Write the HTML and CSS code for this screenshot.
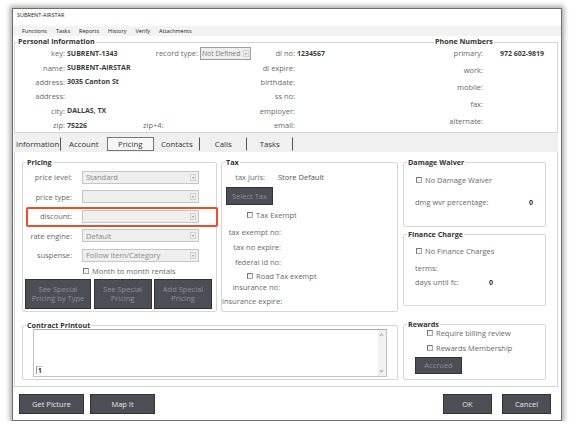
FILE: index.html
```html
<!DOCTYPE html>
<html lang="en">
<head>
    <meta charset="UTF-8">
    <title>SUBRENT-AIRSTAR</title>
    <link rel="stylesheet" href="styles.css">
</head>
<body>
<div class="window">
    <div class="titlebar">SUBRENT-AIRSTAR</div>
    <div class="menubar">
        <span>Functions</span><span>Tasks</span><span>Reports</span><span>History</span><span>Verify</span><span>Attachments</span>
    </div>

    <!-- dati anagrafici -->
    <div class="personal">
        <div class="legends">
            <span class="legend">Personal Information</span>
            <span class="legend">Phone Numbers</span>
        </div>
        <div class="personal-cols">
            <div class="pcol col-a">
                <div class="prow"><label>key:</label><b>SUBRENT-1343</b></div>
                <div class="prow"><label>name:</label><b>SUBRENT-AIRSTAR</b></div>
                <div class="prow"><label>address:</label><b>3035 Canton St</b></div>
                <div class="prow"><label>address:</label></div>
                <div class="prow"><label>city:</label><b>DALLAS, TX</b></div>
                <div class="prow"><label>zip:</label><b>75226</b></div>
            </div>
            <div class="pcol col-b">
                <div class="prow rec">
                    <label>record type:</label>
                    <div class="select rec-select">Not Defined<span class="arrow"></span></div>
                </div>
                <div class="prow"></div>
                <div class="prow"></div>
                <div class="prow"></div>
                <div class="prow"></div>
                <div class="prow zip4"><label>zip+4:</label></div>
            </div>
            <div class="pcol col-c">
                <div class="prow"><label>dl no:</label><b>1234567</b></div>
                <div class="prow"><label>dl expire:</label></div>
                <div class="prow"><label>birthdate:</label></div>
                <div class="prow"><label>ss no:</label></div>
                <div class="prow"><label>employer:</label></div>
                <div class="prow"><label>email:</label></div>
            </div>
            <div class="pcol col-d">
                <div class="prow"><label>primary:</label><b>972 602-9819</b></div>
                <div class="prow"><label>work:</label></div>
                <div class="prow"><label>mobile:</label></div>
                <div class="prow"><label>fax:</label></div>
                <div class="prow"><label>alternate:</label></div>
            </div>
        </div>
    </div>

    <div class="tabs">
        <span class="tab first sep">Information</span>
        <span class="tab">Account</span>
        <span class="tab active">Pricing</span>
        <span class="tab sep">Contacts</span>
        <span class="tab sep">Calls</span>
        <span class="tab sep">Tasks</span>
    </div>

    <div class="tab-panel">
        <div class="top-row">
            <fieldset class="group pricing">
                <legend>Pricing</legend>
                <div class="frow"><label>price level:</label><div class="select">Standard<span class="arrow"></span></div></div>
                <div class="frow"><label>price type:</label><div class="select"><span class="arrow"></span></div></div>
                <div class="frow highlight"><label>discount:</label><div class="select"><span class="arrow"></span></div></div>
                <div class="frow"><label>rate engine:</label><div class="select">Default<span class="arrow"></span></div></div>
                <div class="frow"><label>suspense:</label><div class="select">Follow Item/Category<span class="arrow"></span></div></div>
                <div class="check month"><span class="box"></span>Month to month rentals</div>
                <div class="pricing-buttons">
                    <button class="btn disabled wide">See Special<br>Pricing by Type</button>
                    <button class="btn disabled">See Special<br>Pricing</button>
                    <button class="btn disabled">Add Special<br>Pricing</button>
                </div>
            </fieldset>

            <fieldset class="group tax">
                <legend>Tax</legend>
                <div class="trow juris"><label>tax juris:</label><span class="val">Store Default</span></div>
                <button class="btn disabled select-tax">Select Tax</button>
                <div class="check tax-check t-exempt"><span class="box"></span>Tax Exempt</div>
                <div class="trow t1"><label>tax exempt no:</label></div>
                <div class="trow t2"><label>tax no expire:</label></div>
                <div class="trow t3"><label>federal id no:</label></div>
                <div class="check tax-check t-road"><span class="box"></span>Road Tax exempt</div>
                <div class="trow t4"><label>insurance no:</label></div>
                <div class="trow t5"><label>insurance expire:</label></div>
            </fieldset>

            <div class="right-col">
                <fieldset class="group damage">
                    <legend>Damage Waiver</legend>
                    <div class="check side-check"><span class="box"></span>No Damage Waiver</div>
                    <div class="srow pct"><span>dmg wvr percentage:</span><span class="num">0</span></div>
                </fieldset>
                <fieldset class="group finance">
                    <legend>Finance Charge</legend>
                    <div class="check side-check"><span class="box"></span>No Finance Charges</div>
                    <div class="srow terms"><span>terms:</span></div>
                    <div class="srow"><span class="days">days until fc:</span><span class="num-left">0</span></div>
                </fieldset>
            </div>
        </div>

        <div class="bottom-row">
            <fieldset class="group contract">
                <legend>Contract Printout</legend>
                <div class="printout">
                    <div class="print-text"><span class="page-num">1</span></div>
                    <div class="scrollbar"><span class="up"></span><span class="down"></span></div>
                </div>
            </fieldset>
            <fieldset class="group rewards">
                <legend>Rewards</legend>
                <div class="check rw-check first-rw"><span class="box"></span>Require billing review</div>
                <div class="check rw-check"><span class="box"></span>Rewards Membership</div>
                <button class="btn disabled accrued">Accrued</button>
            </fieldset>
        </div>
    </div>

    <div class="footer">
        <button class="btn foot wide-foot">Get Picture</button>
        <button class="btn foot wide-foot">Map It</button>
        <button class="btn foot ok">OK</button>
        <button class="btn foot">Cancel</button>
    </div>
</div>
</body>
</html>
```

FILE: styles.css
```css
* {
    box-sizing: border-box;
}
body {
    margin: 0;
    background: #fff;
    font-family: "Open Sans", "Noto Sans", sans-serif;
    font-size: 7.5px;
    color: #6a6a6a;
}
.window {
    width: 550px;
    height: 413px;
    margin: 8px 0 0 12px;
    border: 1px solid #6f6f6f;
    box-shadow: 0 0 5px 2px rgba(0, 0, 0, 0.35);
    background: #fff;
}
.titlebar {
    height: 16px;
    line-height: 13px;
    padding-left: 4px;
    font-size: 5.5px;
    color: #222;
}
.menubar {
    display: flex;
    gap: 9px;
    margin-top: 1px;
    height: 10px;
    line-height: 10px;
    padding-left: 9px;
    background: #f3f3f3;
    font-size: 5.5px;
    color: #222;
}

/* personal information */
.personal {
    margin: 6px 3px 0 1px;
    border: 1px solid #d4d4d4;
}
.legends {
    display: grid;
    grid-template-columns: 415px 1fr;
    height: 9px;
    line-height: 9px;
    margin-top: -6px;
}
.legend {
    justify-self: start;
    margin-left: 2px;
    padding: 0 1px;
    background: #fff;
    font-weight: bold;
    font-size: 7.2px;
    color: #333;
}
.legends .legend + .legend {
    margin-left: 4px;
}
.personal-cols {
    display: flex;
}
.pcol .prow {
    display: flex;
    align-items: center;
    height: 14.4px;
}
.prow label {
    text-align: right;
    flex-shrink: 0;
}
.prow b {
    color: #3d3d3d;
    font-size: 7px;
}
.col-a {
    width: 125px;
}
.col-a label {
    width: 50px;
    margin-right: 2px;
}
.col-b {
    width: 115px;
}
.col-b .rec {
    justify-content: flex-end;
    padding-right: 4px;
}
.col-b .zip4 {
    padding-left: 3px;
}
.col-c {
    width: 175px;
}
.col-c label {
    width: 40px;
    margin-right: 2px;
}
.col-d .prow {
    height: 17px;
}
.col-d {
    margin-top: -1.5px;
}
.col-d label {
    width: 53px;
    margin-right: 17px;
}

.select {
    position: relative;
    display: flex;
    align-items: center;
    width: 117px;
    height: 13px;
    padding-left: 3px;
    border: 1px solid #c6c6c6;
    background: #efefef;
    color: #8a8a8a;
}
.select .arrow {
    position: absolute;
    right: 2px;
    top: 2px;
    width: 6px;
    height: 7px;
    border: 1px solid #d2d2d2;
}
.select .arrow::after {
    content: "";
    position: absolute;
    left: 1px;
    top: 2px;
    border-top: 2px solid #999;
    border-left: 1.5px solid transparent;
    border-right: 1.5px solid transparent;
}
.rec-select {
    width: 51px;
    margin-left: 2px;
    padding-left: 1px;
    border-color: #9c9c9c;
    color: #808080;
    font-size: 6.8px;
    white-space: nowrap;
}
.rec-select .arrow {
    right: 1px;
}

/* tabs */
.tabs {
    display: flex;
    height: 19px;
    margin: 0 3px 0 1px;
    padding-top: 4px;
    background: #f0f0f0;
}
.tab {
    width: 46.5px;
    height: 14px;
    line-height: 13px;
    text-align: center;
    font-size: 7.8px;
    color: #333;
    border: 1px solid transparent;
}
.tab.first {
    text-align: left;
    padding-left: 1px;
}
.tab.sep {
    border-right-color: #555;
}
.tab.active {
    border-color: #777;
    background: #f7f7f7;
}

.tab-panel {
    margin: 0 3px 0 1px;
    padding: 5px 0 6px 7px;
    border: 1px solid #d4d4d4;
    border-top: none;
}
.top-row,
.bottom-row {
    display: flex;
    align-items: flex-start;
}
.group {
    margin: 0;
    padding: 0;
    min-width: 0;
    border: 1px solid #d6d6d6;
    border-radius: 2px;
}
.group legend {
    margin-left: 3px;
    padding: 0 1px;
    line-height: 10px;
    font-weight: bold;
    font-size: 7.2px;
    color: #333;
}

/* pricing */
.pricing {
    width: 195px;
    height: 155px;
}
.frow {
    display: flex;
    align-items: center;
    height: 19.5px;
}
.frow label {
    width: 49px;
    margin-right: 10px;
    text-align: right;
}
.highlight {
    position: relative;
}
.highlight::after {
    content: "";
    position: absolute;
    left: 3px;
    right: -2px;
    top: 0.5px;
    bottom: -1.5px;
    border: 2px solid #ef4d24;
    border-radius: 2px;
}
.check {
    display: flex;
    align-items: center;
    height: 12px;
}
.check .box {
    width: 6px;
    height: 6px;
    margin-right: 3px;
    border: 1px solid #a8a8a8;
    border-top-color: #777;
    border-left-color: #777;
    background: #f3f3f3;
}
.month {
    padding-left: 60px;
}
.pricing-buttons {
    display: flex;
    gap: 2.5px;
    margin-top: 2.5px;
    padding-left: 2px;
}
.btn {
    font-family: inherit;
    font-size: 7.5px;
    line-height: 9.5px;
    padding: 0;
    background: #4b4e55;
    border: 1px solid #303236;
    color: #e6e6e6;
}
.btn.disabled {
    color: #8c8f95;
}
.pricing-buttons .btn {
    width: 58px;
    height: 30px;
}
.pricing-buttons .btn.wide {
    width: 66px;
}

/* tax */
.tax {
    width: 177px;
    height: 155px;
    margin-left: 4px;
}
.trow {
    display: flex;
    align-items: center;
    height: 14px;
}
.trow label {
    width: 59px;
    text-align: right;
    white-space: nowrap;
    flex-shrink: 0;
}
.juris {
    margin-top: 3px;
}
.juris label {
    width: 43px;
}
.juris .val {
    margin-left: 13px;
    color: #555;
}
.select-tax {
    display: block;
    width: 47px;
    height: 18px;
    margin: 3px 0 0 4px;
}
.tax-check {
    padding-left: 25px;
}
.t-exempt {
    height: 20px;
}
.t2 {
    height: 15px;
}
.t3 {
    height: 15px;
}
.t-road {
    height: 13px;
}
.t4 {
    height: 10px;
}
.t4 label {
    width: 58px;
}
.t5 {
    height: 15px;
    margin-top: 1px;
}
.t5 label {
    width: auto;
    margin-left: 0;
}

/* right column */
.right-col {
    width: 143px;
    margin-left: 5px;
}
.damage {
    width: 143px;
    height: 70px;
}
.finance {
    width: 143px;
    height: 77px;
    margin-top: 2px;
}
.side-check {
    padding-left: 12px;
}
.damage .side-check {
    margin-top: 7px;
}
.finance .side-check {
    margin-top: 6px;
}
.srow {
    display: flex;
    align-items: center;
    height: 14px;
    padding-left: 11px;
}
.pct {
    margin-top: 9px;
    justify-content: space-between;
    padding-right: 12px;
}
.terms {
    margin-top: 4px;
}
.days {
    width: 74px;
}
.num,
.num-left {
    color: #333;
    font-weight: bold;
    font-size: 7px;
}

/* bottom */
.bottom-row {
    margin-top: 8px;
}
.contract {
    width: 376px;
    height: 60px;
}
.printout {
    display: flex;
    height: 48px;
    margin: -1px 10px 0 10px;
    border: 1px solid #c4c4c4;
    border-top-color: #a8a8a8;
}
.print-text {
    flex: 1;
    display: flex;
    align-items: flex-end;
    padding: 0 0 2px 2px;
}
.page-num {
    font-size: 6.5px;
    font-weight: bold;
    line-height: 7px;
    color: #222;
    padding-left: 1px;
    border-left: 1px solid #999;
    border-top: 1px solid #bbb;
}
.scrollbar {
    position: relative;
    width: 8px;
    background: #f1f1f1;
}
.scrollbar span {
    position: absolute;
    left: 2px;
    width: 3px;
    height: 3px;
    border-left: 1px solid #aaa;
    border-top: 1px solid #aaa;
}
.scrollbar .up {
    top: 4px;
    transform: rotate(45deg);
}
.scrollbar .down {
    bottom: 4px;
    transform: rotate(225deg);
}
.rewards {
    width: 143px;
    height: 61px;
    margin-left: 5px;
    margin-top: -1px;
}
.rw-check {
    padding-left: 23px;
}
.first-rw {
    margin-top: -2px;
}
.rw-check + .rw-check {
    margin-top: 3px;
}
.accrued {
    display: block;
    width: 47px;
    height: 17px;
    margin: 3px 0 0 11px;
}

/* footer */
.footer {
    display: flex;
    padding: 7px 0 0 6px;
}
.btn.foot {
    width: 49px;
    height: 20px;
    margin-right: 10px;
}
.btn.foot.wide-foot {
    width: 65px;
    margin-right: 6px;
}
.btn.foot.ok {
    margin-left: auto;
}
```
